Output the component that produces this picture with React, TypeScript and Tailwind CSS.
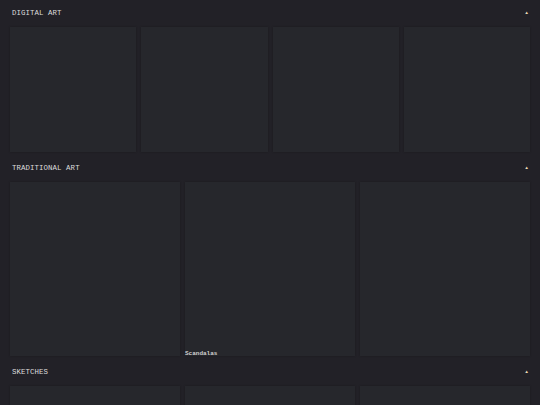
import React from 'react';

type Section = {
  title: string;
  cols: number;
  height: string;
  items: { caption?: string }[];
};

const sections: Section[] = [
  { title: 'Digital Art', cols: 4, height: 'h-[125px]', items: [{}, {}, {}, {}] },
  { title: 'Traditional Art', cols: 3, height: 'h-[174px]', items: [{}, { caption: 'Scandalas' }, {}] },
  { title: 'Sketches', cols: 3, height: 'h-[174px]', items: [{}, {}, {}] },
];

function Card({ caption, height }: { caption?: string; height: string }) {
  return (
    <div className={`relative ${height} bg-[#26272c] shadow-[0_0_2px_rgba(0,0,0,0.25)]`}>
      {caption && (
        <span className="absolute left-0 bottom-[-1px] text-[6px] font-bold leading-none text-[#cfcfcf]">
          {caption}
        </span>
      )}
    </div>
  );
}

export default function App() {
  return (
    <div className="h-[405px] overflow-hidden bg-[#222127] font-['Liberation_Mono','Courier_New',monospace]">
      {sections.map((s) => (
        <section key={s.title} className="pb-[3px]">
          <header className="h-[27px] flex items-center justify-between pl-3 pr-[12px]">
            <h2 className="text-[7.4px] uppercase tracking-[0.01em] text-[#dcdcdc]">{s.title}</h2>
            <span className="text-[4.5px] text-[#eadbb8]">▲</span>
          </header>
          <div
            className={`grid px-[10px] gap-[5px] ${s.cols === 4 ? 'grid-cols-4' : 'grid-cols-3'}`}
          >
            {s.items.map((it, i) => (
              <Card key={i} caption={it.caption} height={s.height} />
            ))}
          </div>
        </section>
      ))}
    </div>
  );
}
